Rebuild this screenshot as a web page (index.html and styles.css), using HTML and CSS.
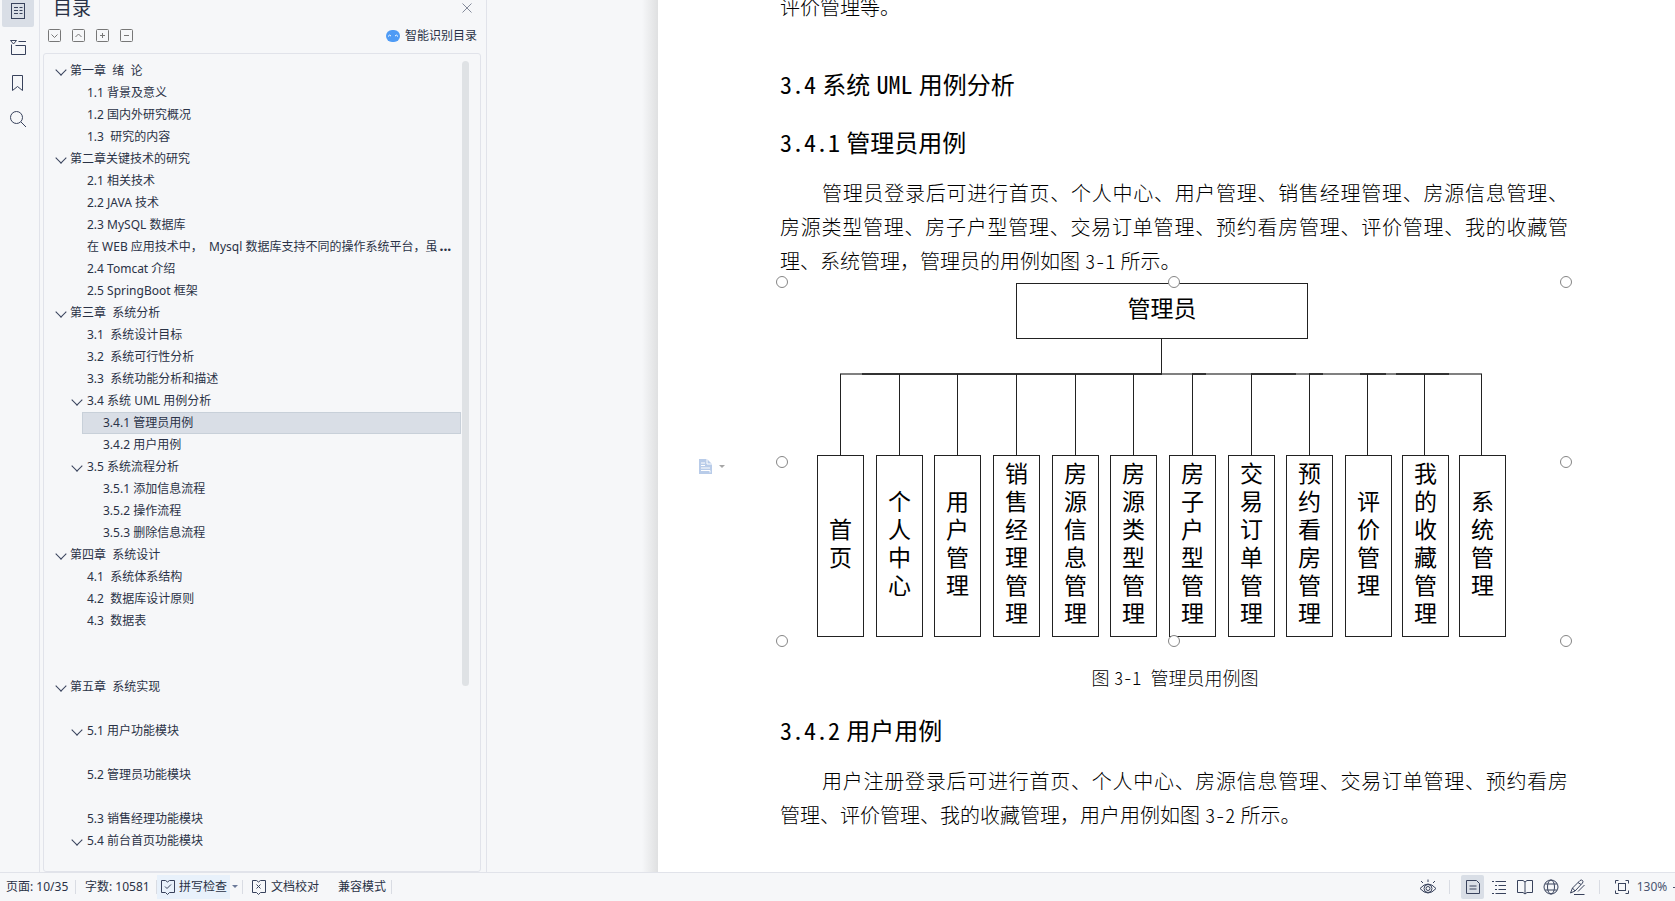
FILE: index.html
```html
<!DOCTYPE html>
<html lang="zh-CN">
<head>
<meta charset="utf-8">
<title>目录 - 文档</title>
<link rel="stylesheet" href="styles.css">
</head>
<body>
<div class="workspace">
  <nav class="rail" aria-label="导航窗格">
    <button class="rail-btn is-active" aria-label="目录"><svg width="16" height="18" viewBox="0 0 16 18"><rect x="1.5" y="1.5" width="13" height="15"/><path d="M4 5.5h4M9.500 5.500h3M4 8.500h4M9.500 8.500h3M4 11.500h4M9.500 11.500h3"/></svg></button>
    <button class="rail-btn" aria-label="章节"><svg width="18" height="18" viewBox="0 0 18 18"><path d="M1.500 2.500h6L4.500 6zM9.500 3.500H17M2.500 6.500v10h14v-9H6.500"/></svg></button>
    <button class="rail-btn" aria-label="书签"><svg width="16" height="18" viewBox="0 0 16 18"><path d="M2.500 1.500h10v15l-5-4-5 4z"/></svg></button>
    <button class="rail-btn" aria-label="查找"><svg width="18" height="18" viewBox="0 0 18 18"><circle cx="7.500" cy="7.500" r="6"/><path d="M12 12l5 5"/></svg></button>
  </nav>

  <aside class="outline">
    <header class="outline-head">
      <h1>目录</h1>
      <button class="close" aria-label="关闭"><svg width="10" height="10" viewBox="0 0 10 10"><path d="M.5.5l9 9M9.500.5l-9 9"/></svg></button>
    </header>
    <div class="outline-tools">
      <button aria-label="展开"><svg width="13" height="13" viewBox="0 0 13 13"><rect x=".5" y=".5" width="12" height="12" rx="1"/><path d="M3.500 5.500l3 3 3-3"/></svg></button>
      <button aria-label="收起"><svg width="13" height="13" viewBox="0 0 13 13"><rect x=".5" y=".5" width="12" height="12" rx="1"/><path d="M3.500 8l3-3 3 3"/></svg></button>
      <button aria-label="增加"><svg width="13" height="13" viewBox="0 0 13 13"><rect x=".5" y=".5" width="12" height="12" rx="1"/><path d="M4 6.500h5M6.500 4v5"/></svg></button>
      <button aria-label="减少"><svg width="13" height="13" viewBox="0 0 13 13"><rect x=".5" y=".5" width="12" height="12" rx="1"/><path d="M4 6.500h5"/></svg></button>
      <button class="smart"><svg width="14" height="12" viewBox="0 0 14 12"><rect width="14" height="12" rx="6" fill="#4f9bf5" stroke="none"/><path d="M2 6.500q1.500-2.500 3-.5M9 6q1.500-2 3 .5" stroke="#fff"/></svg>智能识别目录</button>
    </div>
    <div class="tree-box">
      <ul class="tree">
        <li class="l1 open"><a href="#">第一章&nbsp; 绪&nbsp; 论</a></li>
        <li class="l2"><a href="#">1.1 背景及意义</a></li>
        <li class="l2"><a href="#">1.2 国内外研究概况</a></li>
        <li class="l2"><a href="#">1.3&nbsp; 研究的内容</a></li>
        <li class="l1 open"><a href="#">第二章关键技术的研究</a></li>
        <li class="l2"><a href="#">2.1 相关技术</a></li>
        <li class="l2"><a href="#">2.2 JAVA 技术</a></li>
        <li class="l2"><a href="#">2.3 MySQL 数据库</a></li>
        <li class="l2"><a href="#">在 WEB 应用技术中，&nbsp; Mysql 数据库支持不同的操作系统平台，虽<b>...</b></a></li>
        <li class="l2"><a href="#">2.4 Tomcat 介绍</a></li>
        <li class="l2"><a href="#">2.5 SpringBoot 框架</a></li>
        <li class="l1 open"><a href="#">第三章&nbsp; 系统分析</a></li>
        <li class="l2"><a href="#">3.1&nbsp; 系统设计目标</a></li>
        <li class="l2"><a href="#">3.2&nbsp; 系统可行性分析</a></li>
        <li class="l2"><a href="#">3.3&nbsp; 系统功能分析和描述</a></li>
        <li class="l2 open"><a href="#">3.4 系统 UML 用例分析</a></li>
        <li class="l3 current"><a href="#admin" aria-current="true">3.4.1 管理员用例</a></li>
        <li class="l3"><a href="#user">3.4.2 用户用例</a></li>
        <li class="l2 open"><a href="#">3.5 系统流程分析</a></li>
        <li class="l3"><a href="#">3.5.1 添加信息流程</a></li>
        <li class="l3"><a href="#">3.5.2 操作流程</a></li>
        <li class="l3"><a href="#">3.5.3 删除信息流程</a></li>
        <li class="l1 open"><a href="#">第四章&nbsp; 系统设计</a></li>
        <li class="l2"><a href="#">4.1&nbsp; 系统体系结构</a></li>
        <li class="l2"><a href="#">4.2&nbsp; 数据库设计原则</a></li>
        <li class="l2 gap-two"><a href="#">4.3&nbsp; 数据表</a></li>
        <li class="l1 open gap-one"><a href="#">第五章&nbsp; 系统实现</a></li>
        <li class="l2 open gap-one"><a href="#">5.1 用户功能模块</a></li>
        <li class="l2 gap-one"><a href="#">5.2 管理员功能模块</a></li>
        <li class="l2"><a href="#">5.3 销售经理功能模块</a></li>
        <li class="l2 open"><a href="#">5.4 前台首页功能模块</a></li>
      </ul>
      <div class="scroll"><div class="thumb"></div></div>
    </div>
  </aside>

  <main class="desk">
    <article class="page">
      <p class="body-text lead">评价管理等。</p>
      <h2><span class="latin">3.4</span> 系统 <span class="latin">UML</span> 用例分析</h2>
      <h3 id="admin"><span class="latin">3.4.1</span> 管理员用例</h3>
      <p class="body-text">
        <span class="line first">管理员登录后可进行首页、个人中心、用户管理、销售经理管理、房源信息管理、</span>
        <span class="line">房源类型管理、房子户型管理、交易订单管理、预约看房管理、评价管理、我的收藏管</span>
        <span class="line last">理、系统管理，管理员的用例如图 <span class="latin">3-1</span> 所示。</span>
      </p>
      <figure>
        <div class="diagram">
          <button class="layout-opt" aria-label="布局选项"><svg width="26" height="16" viewBox="0 0 26 16"><path d="M0 0h8l5 5v10H0z" fill="#b9cce9"/><path d="M8 0v5h5M2 4h4M2 6.500h4M2 9h9M2 11.500h9v2" fill="none" stroke="#fff"/><path d="M20 6h6l-3 3z" fill="#a6a6a6"/></svg></button>
          <svg class="wires" width="784" height="359" viewBox="0 0 784 359">
            <path class="bus" d="M58 92h642"/>
            <path class="bus dark" d="M80 92h300M410 92h14M469 92h45M527 92h14M578 92h26M614 92h53"/>
            <path d="M379.500 57v35M58.500 92v81M117.500 92v81M175.500 92v81M234.500 92v81M293.500 92v81M351.500 92v81M410.500 92v81M469.500 92v81M527.500 92v81M585.500 92v81M642.500 92v81M699.500 92v81"/>
          </svg>
          <div class="node root">管理员</div>
          <div class="node leaf n1"><span>首页</span></div>
          <div class="node leaf n2"><span>个人中心</span></div>
          <div class="node leaf n3"><span>用户管理</span></div>
          <div class="node leaf n4"><span>销售经理管理</span></div>
          <div class="node leaf n5"><span>房源信息管理</span></div>
          <div class="node leaf n6"><span>房源类型管理</span></div>
          <div class="node leaf n7"><span>房子户型管理</span></div>
          <div class="node leaf n8"><span>交易订单管理</span></div>
          <div class="node leaf n9"><span>预约看房管理</span></div>
          <div class="node leaf n10"><span>评价管理</span></div>
          <div class="node leaf n11"><span>我的收藏管理</span></div>
          <div class="node leaf n12"><span>系统管理</span></div>
          <i class="handle t l"></i><i class="handle t c"></i><i class="handle t r"></i>
          <i class="handle m l"></i><i class="handle m r"></i>
          <i class="handle b l"></i><i class="handle b c"></i><i class="handle b r"></i>
        </div>
        <figcaption>图 <span class="latin">3-1</span>&nbsp; 管理员用例图</figcaption>
      </figure>
      <h3 id="user" class="after-figure"><span class="latin">3.4.2</span> 用户用例</h3>
      <p class="body-text">
        <span class="line first">用户注册登录后可进行首页、个人中心、房源信息管理、交易订单管理、预约看房</span>
        <span class="line last">管理、评价管理、我的收藏管理，用户用例如图 <span class="latin">3-2</span> 所示。</span>
      </p>
    </article>
  </main>
</div>

<footer class="status">
  <span class="cell pages">页面: 10/35</span>
  <span class="cell words">字数: 10581</span>
  <button class="spell"><svg width="16" height="16" viewBox="0 0 16 16"><path d="M5.500 1.500h-4v12h4l2 2 2-2h5v-12h-5l-2 1.500zM5 7.500l2 2 4-4"/></svg>拼写检查</button>
  <button class="drop" aria-label="拼写选项"><svg width="6" height="4" viewBox="0 0 6 4"><path d="M0 0h6L3 3z" fill="#6c7a99" stroke="none"/></svg></button>
  <button class="proof"><svg width="16" height="16" viewBox="0 0 16 16"><path d="M5.500 1.500h-4v12h4l2 2 2-2h5v-12h-5l-2 1.500zM5.500 5.500l4 4M9.500 5.500l-4 4"/></svg>文档校对</button>
  <span class="cell compat">兼容模式</span>
  <div class="views">
    <button aria-label="护眼模式"><svg width="18" height="16" viewBox="0 0 18 16"><path d="M1 9.500q8-9 16 0-8 9-16 0zM9 3V.5M4 4L2 2M14 4l2-2"/><circle cx="9" cy="9.500" r="4"/><circle cx="9" cy="9.500" r="2"/></svg></button>
    <i class="sep"></i>
    <button class="on" aria-label="页面视图"><svg width="16" height="16" viewBox="0 0 16 16"><path d="M1.500 1.500h10l3 3v10h-13zM4.500 7h7M4.500 10h7"/></svg></button>
    <button aria-label="大纲"><svg width="16" height="16" viewBox="0 0 16 16"><path d="M1 2.500h2M4.500 2.500H15M4 6.500h2M7.500 6.500H15M4 10.500h2M7.500 10.500H15M1 14.500h2M4.500 14.500H15"/></svg></button>
    <button aria-label="阅读版式"><svg width="16" height="16" viewBox="0 0 16 16"><path d="M6 1.500H.5v12H6l2 1.500 2-1.500h5.500v-12H10L8 3 6 1.500M8 3v12"/></svg></button>
    <button aria-label="Web 版式"><svg width="16" height="16" viewBox="0 0 16 16"><circle cx="8" cy="8" r="7"/><ellipse cx="8" cy="8" rx="3.500" ry="7"/><path d="M2 5h12M2 11h12"/></svg></button>
    <button aria-label="写作模式"><svg width="17" height="17" viewBox="0 0 17 17"><path d="M1.500 14l2-5 7.500-7.500q1.500-1 2.500 0t0 2.500L6 12zM3.500 9l2.500 3M9 3.500l3 2M5 15.500h10.500M15.500 6L9 12.500"/></svg></button>
    <i class="sep wide"></i>
    <button aria-label="适合页宽"><svg width="16" height="16" viewBox="0 0 16 16"><path d="M4.500 1.500h-3v3M11.500 1.500h3v3M4.500 14.500h-3v-3M11.500 14.500h3v-3"/><rect x="4.500" y="4.500" width="7" height="7"/></svg></button>
    <button class="zoom">130%</button>
    <i class="minus"></i>
  </div>
</footer>
</body>
</html>
```
FILE: styles.css
```css
* { box-sizing: border-box; }
html, body { height: 100%; }
body {
  margin: 0;
  display: flex;
  flex-direction: column;
  overflow: hidden;
  background: #f6f7f9;
  color: #2a3246;
  font: 12px/22px "Noto Sans", "Noto Sans CJK SC", sans-serif;
}
button {
  display: flex;
  align-items: center;
  padding: 0;
  border: 0;
  background: none;
  color: inherit;
  font: inherit;
}
svg { display: block; fill: none; stroke: #38425c; flex: none; }
ul, h1, h2, h3, p, figure { margin: 0; padding: 0; }
a { color: inherit; text-decoration: none; }

.workspace { flex: 1; display: flex; min-height: 0; overflow: hidden; }

/* icon rail */
.rail {
  width: 40px;
  flex: none;
  display: flex;
  flex-direction: column;
  align-items: center;
  gap: 4px;
  margin-top: -5px;
  padding-right: 3px;
  border-right: 1px solid #e1e3ea;
}
.rail-btn { width: 32px; height: 32px; justify-content: center; border-radius: 2px; }
.rail-btn.is-active { background: #d9dee6; }

/* outline panel */
.outline {
  width: 447px;
  flex: none;
  display: flex;
  flex-direction: column;
  padding: 0 5px 0 3px;
  border-right: 1px solid #e1e3ea;
}
.outline-head { height: 24px; display: flex; justify-content: space-between; padding: 0 9px 0 10px; }
.outline-head h1 { margin-top: -6px; font-size: 19px; line-height: 28px; font-weight: 400; }
.close { height: 16px; }
.close svg { stroke: #858b9b; }
.outline-tools { display: flex; gap: 11px; align-items: center; height: 22px; padding: 0 4px 0 5px; }
.outline-tools svg { stroke: #777; }
.outline-tools .smart { margin-left: auto; gap: 5px; padding-top: 1px; }
.tree-box {
  flex: 1;
  min-height: 0;
  display: flex;
  margin-top: 7px;
  border: 1px solid #e1e3ea;
  border-radius: 3px;
  overflow: hidden;
}
.tree { flex: 1; min-width: 0; padding: 6px 0 0 7px; list-style: none; white-space: nowrap; }
.tree li { position: relative; height: 22px; }
.tree b { font-size: 14px; line-height: 20px; margin-left: 2px; }
.tree .l1 { padding-left: 19px; }
.tree .l2 { padding-left: 36px; }
.tree .l3 { margin-left: 31px; padding-left: 21px; }
.tree .gap-one { margin-bottom: 22px; }
.tree .gap-two { margin-bottom: 44px; }
.tree .current { background: #d9dee6; outline: 1px solid #c8d0d9; outline-offset: -1px; }
.tree .open::before {
  content: "";
  position: absolute;
  left: 6px;
  top: 6px;
  width: 7px;
  height: 7px;
  border: solid #38425c;
  border-width: 0 1px 1px 0;
  transform: rotate(45deg);
}
.tree .l2.open::before { left: 22px; }
.scroll { width: 19px; padding: 7px 11px 0 1px; }
.thumb { width: 7px; height: 625px; border-radius: 4px; background: #dfe2e5; }

/* document */
.desk { flex: 1; min-width: 0; padding-left: 155px; display: flex; }
.desk::before {
  content: "";
  width: 16px;
  flex: none;
  background: linear-gradient(90deg, #f6f7f9, #dfe0e1);
}
.page {
  flex: 1;
  min-width: 0;
  padding: 0 107px 0 122px;
  background: #fff;
  color: #000;
}
h2, h3 { font-size: 24px; line-height: 36px; font-weight: 400; }
h2 { margin-top: 42px; }
h3 { margin-top: 22px; }
.latin {
  font-family: "Noto Sans CJK SC", monospace;
  font-feature-settings: "hwid";
  line-height: 1;
}
.body-text { margin-top: 16px; font-size: 20px; line-height: 34px; font-weight: 300; }
.body-text.lead { margin-top: -9px; }
.line { display: block; white-space: nowrap; text-align: justify; text-align-last: justify; }
.line.first { padding-left: 42px; }
.line.last { text-align-last: left; }

figure { margin: 3px 0 0 2px; }
.diagram { position: relative; width: 784px; height: 359px; }
.wires { position: absolute; inset: 0; stroke: #222; }
.bus { stroke: #808080; stroke-width: 2; }
.bus.dark { stroke: #333; }
.node {
  position: absolute;
  display: flex;
  align-items: center;
  justify-content: center;
  padding-bottom: 6px;
  border: 1px solid #222;
  font-size: 23px;
  line-height: 28px;
}
.root { left: 234px; top: 1px; width: 292px; height: 56px; }
.leaf { top: 173px; width: 47px; height: 182px; }
.leaf span { width: 23px; line-break: anywhere; word-break: break-all; }
.n1 { left: 35px; }
.n2 { left: 94px; }
.n3 { left: 152px; }
.n4 { left: 211px; }
.n5 { left: 270px; }
.n6 { left: 328px; }
.n7 { left: 387px; }
.n8 { left: 446px; }
.n9 { left: 504px; }
.n10 { left: 563px; }
.n11 { left: 620px; }
.n12 { left: 677px; }
.handle {
  position: absolute;
  width: 12px;
  height: 12px;
  margin: -6px;
  border: 1px solid #858585;
  border-radius: 50%;
  background: #fff;
}
.t { top: 0; }
.m { top: 50%; }
.b { top: 100%; }
.l { left: 0; }
.c { left: 50%; }
.r { left: 100%; }
.layout-opt { position: absolute; left: -83px; top: 177px; }
.layout-opt svg { stroke: none; }
figcaption { margin-top: 25px; text-align: center; font-size: 18px; line-height: 24px; font-weight: 300; }
.after-figure { margin-top: 23px; }

/* status bar */
.status {
  height: 29px;
  flex: none;
  display: flex;
  align-items: center;
  border-top: 1px solid #e1e3ea;
  font-size: 12px;
  white-space: nowrap;
}
.cell { height: 14px; line-height: 14px; border-right: 1px solid #d9dce3; }
.pages { width: 76px; padding-left: 6px; }
.words { width: 81px; padding-left: 9px; }
.spell { height: 24px; width: 73px; padding-left: 3px; gap: 3px; background: #e8f1fb; }
.drop { height: 14px; width: 13px; padding-left: 2px; border-right: 1px solid #d9dce3; }
.proof { padding-left: 8px; gap: 4px; }
.compat { margin-left: 19px; width: 54px; }
.views { margin-left: auto; display: flex; align-items: center; }
.views button { width: 26px; height: 24px; justify-content: center; border-radius: 2px; }
.views .on { width: 23px; margin-right: 2px; background: #d9dee6; }
.sep { width: 1px; height: 14px; margin: 0 11px 0 8px; background: #d9dce3; }
.sep.wide { margin: 0 9px 0 9px; }
.views .zoom { width: 34px; color: #4a5570; margin: 0 4px 0 0; }
.minus { width: 2px; height: 1px; background: #4a5570; }
```
